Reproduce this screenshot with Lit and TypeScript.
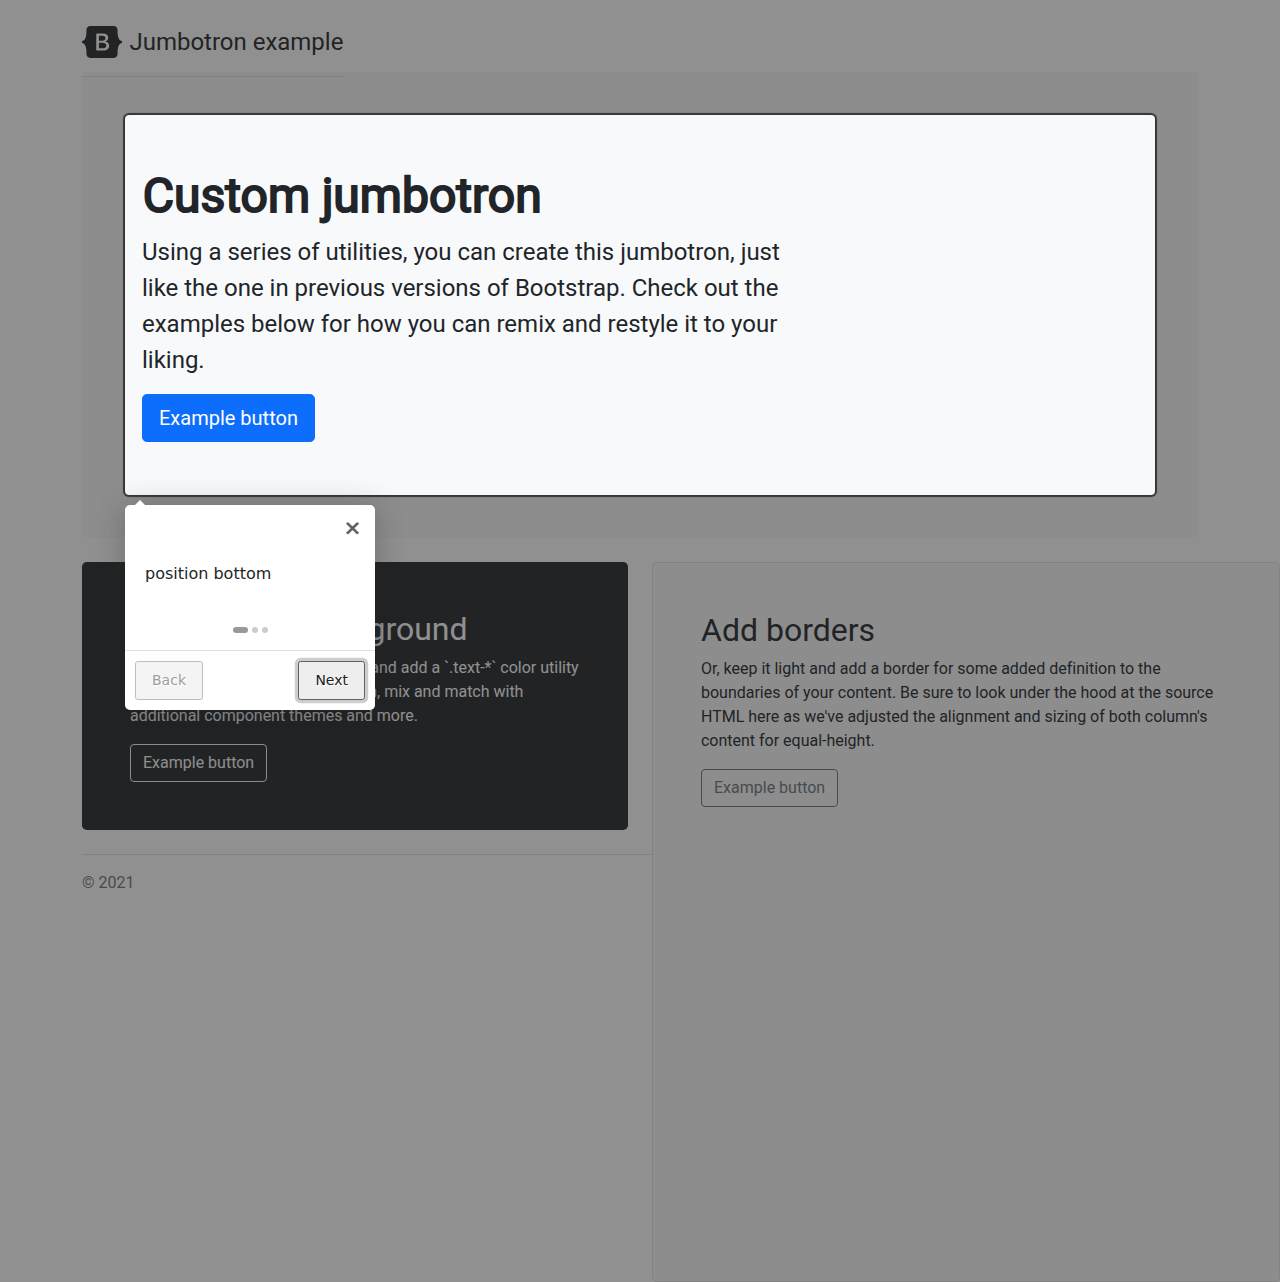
import { LitElement, html, css, svg } from "lit";
import { customElement, property } from "lit/decorators.js";

const logo = svg`<path fill="currentColor" fill-rule="evenodd" clip-rule="evenodd" d="M24.509 0c-6.733 0-11.715 5.893-11.492 12.284.214 6.14-.064 14.092-2.066 20.577C8.943 39.365 5.547 43.485 0 44.014v5.972c5.547.529 8.943 4.649 10.951 11.153 2.002 6.485 2.28 14.437 2.066 20.577C12.794 88.106 17.776 94 24.51 94H93.5c6.733 0 11.714-5.893 11.491-12.284-.214-6.14.064-14.092 2.066-20.577 2.009-6.504 5.396-10.624 10.943-11.153v-5.972c-5.547-.529-8.934-4.649-10.943-11.153-2.002-6.484-2.28-14.437-2.066-20.577C105.214 5.894 100.233 0 93.5 0H24.508zM80 57.863C80 66.663 73.436 72 62.543 72H44a2 2 0 01-2-2V24a2 2 0 012-2h18.437c9.083 0 15.044 4.92 15.044 12.474 0 5.302-4.01 10.049-9.119 10.88v.277C75.317 46.394 80 51.21 80 57.863zM60.521 28.34H49.948v14.934h8.905c6.884 0 10.68-2.772 10.68-7.727 0-4.643-3.264-7.207-9.012-7.207zM49.948 49.2v16.458H60.91c7.167 0 10.964-2.876 10.964-8.281 0-5.406-3.903-8.178-11.425-8.178H49.948z"/>`;

@customElement("tour-tooltip")
export class TourTooltip extends LitElement {
  @property() text = "";
  @property({ type: Number }) steps = 3;
  @property({ type: Number }) current = 0;

  static styles = css`
    :host {
      display: block;
      box-sizing: border-box;
      width: 250px;
      background: #fff;
      border-radius: 5px;
      box-shadow: 0 3px 30px rgba(33, 33, 33, 0.3);
      font: 16px/24px "DejaVu Sans", sans-serif;
      color: #212529;
    }
    .arrow {
      position: absolute;
      top: -10px;
      left: 10px;
      border: 5px solid transparent;
      border-bottom-color: #fff;
    }
    .header {
      display: flex;
      justify-content: flex-end;
      height: 37px;
    }
    .close {
      width: 45px;
      height: 45px;
      line-height: 45px;
      font-size: 22px;
      font-weight: 700;
      text-align: center;
      color: #616161;
    }
    .text {
      padding: 20px;
    }
    .bullets {
      display: flex;
      justify-content: center;
      gap: 4px;
      padding: 21px 0 17px;
    }
    .bullet {
      width: 6px;
      height: 6px;
      border-radius: 10px;
      background: #ccc;
    }
    .bullet.active {
      width: 15px;
      background: #999;
    }
    .buttons {
      display: flex;
      justify-content: space-between;
      padding: 10px;
      border-top: 1px solid #e0e0e0;
    }
    .button {
      box-sizing: border-box;
      height: 39px;
      padding: 8px 16px;
      border: 1px solid #616161;
      border-radius: 0.2em;
      background: #eee;
      color: #212121;
      font: 14px/21px "DejaVu Sans", sans-serif;
      text-shadow: 1px 1px 0 #fff;
      box-shadow: 0 0 0 3.2px rgba(158, 158, 158, 0.5);
    }
    .button:disabled {
      border-color: #bdbdbd;
      background: #f4f4f4;
      color: #9e9e9e;
      box-shadow: none;
    }
  `;

  render() {
    return html`
      <div class="arrow"></div>
      <div class="header"><div class="close">×</div></div>
      <div class="text">${this.text}</div>
      <div class="bullets">
        ${Array.from({ length: this.steps }, (_, i) => html`<span class="bullet ${i === this.current ? "active" : ""}"></span>`)}
      </div>
      <div class="buttons">
        <button class="button" ?disabled=${this.current === 0}>Back</button>
        <button class="button">Next</button>
      </div>
    `;
  }
}

@customElement("app-root")
export class AppRoot extends LitElement {
  static styles = css`
    :host {
      display: block;
      box-sizing: border-box;
      height: 1282px;
      overflow: hidden;
      padding: 24px 82px 0;
      background: #fff;
      color: #212529;
      font: 16px/24px Roboto, sans-serif;
    }
    h1, h2, p {
      margin: 0;
    }
    .header {
      position: relative;
      display: flex;
      align-items: center;
      gap: 7.5px;
      box-sizing: border-box;
      width: 262px;
      height: 53px;
      padding-bottom: 16px;
      margin-bottom: -5px;
      border-bottom: 1px solid #dee2e6;
      font-size: 24px;
      line-height: 36px;
      letter-spacing: -0.015px;
      white-space: nowrap;
    }
    .jumbotron {
      padding: 48px;
      margin-bottom: 24px;
      border-radius: 4.8px;
      background: #f8f9fa;
    }
    .intro {
      position: relative;
      padding: 48px 12px;
    }
    .highlight {
      position: absolute;
      inset: -5px;
      z-index: 5;
      border-radius: 4px;
      box-shadow: rgba(33, 33, 33, 0.8) 0 0 1px 2px, rgba(33, 33, 33, 0.5) 0 0 0 5000px;
    }
    tour-tooltip {
      position: absolute;
      top: calc(100% + 15px);
      left: -5px;
      z-index: 6;
    }
    .title {
      padding: 0 0 1.6px 0.8px;
      font-size: 48px;
      line-height: 56px;
      font-weight: 400;
      -webkit-text-stroke: 2px currentColor;
      margin-bottom: 8px;
    }
    .lead {
      width: 664px;
      font-size: 24px;
      line-height: 36px;
      letter-spacing: -0.008px;
      margin-bottom: 16px;
    }
    .btn {
      display: block;
      box-sizing: border-box;
      height: 38px;
      padding: 6px 12px;
      border: 1px solid currentColor;
      border-radius: 4px;
      background: transparent;
      font: 16px/24px Roboto, sans-serif;
    }
    .btn.primary {
      height: 48px;
      padding: 8px 16px;
      border-color: #0d6efd;
      border-radius: 4.8px;
      background: #0d6efd;
      color: #fff;
      font-size: 20px;
      line-height: 30px;
    }
    .btn.light {
      color: #f8f9fa;
    }
    .btn.secondary {
      color: #6c757d;
    }
    .columns {
      display: grid;
      grid-template-columns: 546px 628px;
      gap: 24px;
    }
    .card {
      box-sizing: border-box;
      padding: 48px;
      border-radius: 4.8px;
    }
    .card h2 {
      font-size: 32px;
      line-height: 38.4px;
      font-weight: 400;
      margin-bottom: 8px;
    }
    .card p {
      margin-bottom: 16px;
      letter-spacing: -0.008px;
    }
    .card.dark {
      background: #212529;
      color: #fff;
    }
    .card.bordered {
      position: relative;
      height: 720.4px;
      border: 1px solid #dee2e6;
      background: #f8f9fa;
    }
    .footer {
      margin: 24px -24px 0 0;
      padding-top: 16px;
      border-top: 1px solid #dee2e6;
      color: #6c757d;
    }
  `;

  render() {
    return html`
      <header class="header">
        <svg width="40" height="32" viewBox="0 0 118 94">${logo}</svg>
        <span>Jumbotron example</span>
      </header>
      <section class="jumbotron">
        <div class="intro">
          <h1 class="title">Custom jumbotron</h1>
          <p class="lead">Using a series of utilities, you can create this jumbotron, just like the one in previous versions of Bootstrap. Check out the examples below for how you can remix and restyle it to your liking.</p>
          <button class="btn primary">Example button</button>
          <div class="highlight"></div>
          <tour-tooltip text="position bottom"></tour-tooltip>
        </div>
      </section>
      <div class="columns">
        <div>
          <section class="card dark">
            <h2>Change the background</h2>
            <p>Swap the background-color utility and add a \`.text-*\` color utility to mix up the jumbotron look. Then, mix and match with additional component themes and more.</p>
            <button class="btn light">Example button</button>
          </section>
          <footer class="footer">© 2021</footer>
        </div>
        <section class="card bordered">
          <h2>Add borders</h2>
          <p>Or, keep it light and add a border for some added definition to the boundaries of your content. Be sure to look under the hood at the source HTML here as we've adjusted the alignment and sizing of both column's content for equal-height.</p>
          <button class="btn secondary">Example button</button>
        </section>
      </div>
    `;
  }
}
